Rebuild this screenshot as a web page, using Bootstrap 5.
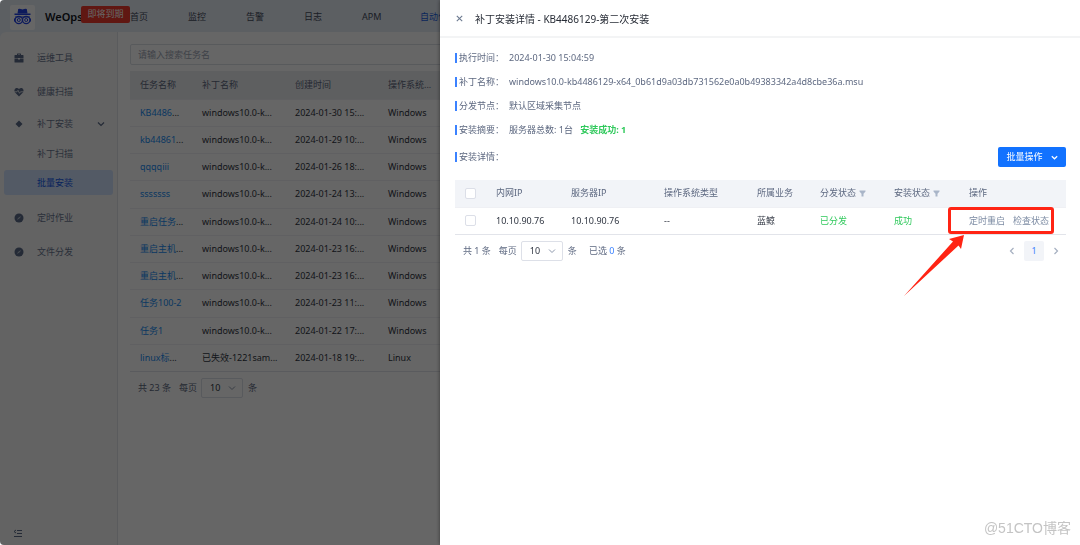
<!DOCTYPE html>
<html lang="zh-CN">
<head>
<meta charset="utf-8">
<meta name="viewport" content="width=device-width, initial-scale=1">
<title>WeOps</title>
<link href="https://cdn.jsdelivr.net/npm/bootstrap@5.3.0/dist/css/bootstrap.min.css" rel="stylesheet">
<script src="https://cdn.jsdelivr.net/npm/bootstrap@5.3.0/dist/js/bootstrap.bundle.min.js" defer></script>
<style>
  :root { --ink: #303642; --muted: #5d6880; --line: #eff0f4; --brand: #1272ff; }
  body { font-family: "Noto Sans", "Noto Sans CJK SC", sans-serif; font-size: 9px; line-height: 14px; color: var(--ink); background: #fff; overflow: hidden; }
  a { text-decoration: none; }
  svg { display: block; flex: none; }
  button { font: inherit; }

  .shell { background: #e6edf6; border-radius: 4px 0 0 4px; overflow: hidden; }
  .topbar { height: 32px; padding: 2px 0 0 10px; }
  .logo { width: 25px; height: 25px; border-radius: 2px; background: #fff; }
  .brand { font-size: 11px; font-weight: 600; color: #11151c; margin-left: 10px; }
  .brand-cell { width: 120px; }
  .expiry { top: 1px; left: 71px; width: 49px; height: 17px; line-height: 16px; border-radius: 2px; background: #f03a2d; color: #fff; }
  .topnav a { width: 58px; flex: none; color: #444c5c; }
  .topnav a.active { color: #1a5ee0; }

  .side { width: 118px; flex: none; background: #f7f7f7; border-right: 1px solid #e2e4e8; border-radius: 6px 0 0 0; padding: 9px 4px 6px; }
  .side .item { display: flex; align-items: center; height: 34px; border-radius: 3px; color: #6a7690; padding: 0 8px 0 9px; }
  .side .item > svg { width: 12px; height: 12px; margin-right: 12px; color: #5a6a88; }
  .side .parent { height: 30px; }
  .side .sub { height: 25px; padding-left: 33px; margin: 2px 0; }
  .side .sub + .sub { margin: 2px 0 6px; }
  .side .sub.active { background: #cfe0fd; color: #1559e8; }
  .side .item > svg.chev { width: 8px; height: 8px; margin: 0 0 0 auto; }

  .search { font-size: 9px; height: 21px; padding: 0 7px; border-radius: 2px; border-color: #dde0e7; }
  .search::placeholder { color: #9da5b5; }
  .grid-table { width: 100%; table-layout: fixed; }
  .grid-table th { font-weight: 400; color: var(--muted); }
  .grid-table th, .grid-table td { padding: 0 0 0 10px; white-space: nowrap; border-bottom: 1px solid var(--line); vertical-align: middle; }
  .grid-table thead tr { background: #f2f4f8; }
  .grid-table tbody tr:last-child td { border-bottom-color: #e2e4ea; }
  .tasks { height: 301px; margin-top: 6px; }
  .tasks thead th { height: 28px; background: #eceef1; }
  .tasks a { color: #188cf2; }

  .pager { color: var(--muted); height: 20px; margin-top: 6px; padding: 0 6px 0 8px; }
  .size-box { position: relative; width: 42px; height: 20px; color: #8c97ab; }
  .size-box select { appearance: none; width: 100%; height: 100%; border: 1px solid #dde0e8; border-radius: 2px; background: transparent; padding: 0 8px; color: var(--ink); font: inherit; }
  .size-box svg { position: absolute; right: 7px; top: 6px; }

  .offcanvas-backdrop.show { opacity: .6; border-radius: 4px 0 0 4px; }
  .drawer.offcanvas { width: calc(100vw - 440px); border: 0; color: var(--muted); box-shadow: 0 0 4px rgba(0,0,0,.5); }
  .drawer-head { height: 38px; border-bottom: 2px solid #f3f4f5; padding-left: 16px; }
  .drawer-head h1 { font-size: 10px; line-height: 14px; font-weight: 400; color: #272c36; margin: 2px 0 0 12px; }
  .close-x { border: 0; background: none; padding: 0; color: #6c7a90; }
  .drawer-main { padding: 13px 14px 0 15px; }
  .fact { display: flex; align-items: center; height: 14px; margin-bottom: 10px; }
  .fact dt { width: 54px; font-weight: 400; display: flex; align-items: center; gap: 2px; }
  .fact dt::before { content: ""; width: 2px; height: 10px; background: #3b82ff; }
  .fact dd { margin: 0; }
  .okay { color: #30c95c; }
  .total { margin-left: 5px; }
  .batch { width: 68px; height: 20px; border: 0; border-radius: 2px; background: var(--brand); color: #fff; font-size: 9px; padding: 0; }
  .servers { margin-top: 13px; color: var(--ink); }
  .servers th { height: 27px; }
  .servers td { height: 27px; }
  .servers .form-check-input { display: block; width: 11px; height: 11px; margin: 0; border-color: #dcdfe8; border-radius: 2px; }
  .servers svg.funnel { display: inline-block; margin-left: 3px; color: #a9b5c8; vertical-align: -1px; }
  .servers td a { color: #7c8ba3; }
  .callout-box { position: absolute; left: -11px; top: -1px; width: 106px; height: 27px; border: 3px solid #ff2414; border-radius: 3px; pointer-events: none; }
  .callout-arrow { position: absolute; left: -55px; top: 27px; pointer-events: none; }
  .page-now { width: 20px; height: 20px; border: 0; padding: 0; border-radius: 2px; background: #f2f4f8; color: #3b82ff; }
  .page-step { border: 0; padding: 0; background: none; color: #a5afc0; }
  .watermark { position: absolute; right: 9px; bottom: 7px; font: 14px/20px "Liberation Sans", "Noto Sans CJK SC", sans-serif; color: #c4c4c4; }
</style>
</head>
<body>
<div class="shell d-flex flex-column vh-100">
  <header class="topbar d-flex align-items-center flex-shrink-0">
    <div class="brand-cell d-flex align-items-center position-relative flex-shrink-0">
      <span class="logo d-flex align-items-center justify-content-center">
        <svg width="19" height="18" viewBox="0 0 19 18" fill="none" stroke="#2243e6"><path d="M5.200 1Q7 .5 9.500 1.500 12 .5 13.800 1L14.500 5.500H4.500Z" fill="#2243e6" stroke="none"/><path d="M1.500 6.300h16" stroke-width="1.600"/><circle cx="5.800" cy="12" r="3.700" stroke-width="1.300"/><circle cx="13.200" cy="12" r="3.700" stroke-width="1.300"/><circle cx="5.800" cy="12" r="1.500"/><circle cx="13.200" cy="12" r="1.500"/><path d="M2 9h15M1.500 10.500v3M17.500 10.500v3"/></svg>
      </span>
      <span class="brand">WeOps</span>
      <span class="expiry position-absolute text-center">即将到期</span>
    </div>
    <nav class="topnav d-flex overflow-hidden">
      <a href="#">首页</a><a href="#">监控</a><a href="#">告警</a><a href="#">日志</a><a href="#">APM</a><a href="#" class="active">自动化</a>
    </nav>
  </header>
  <div class="d-flex flex-grow-1">
    <aside class="side d-flex flex-column">
      <a href="#" class="item"><svg viewBox="0 0 12 12" fill="currentColor"><path d="M4 3V2q0-.5.500-.5h3Q8 1.500 8 2v1h2q.5 0 .5.500V6h-9V3.500Q1.500 3 2 3ZM5 2.500V3h2v-.5ZM1.500 6.600H5v1h2v-1h3.500v3.400q0 .5-.5.500H2q-.5 0-.5-.5Z"/></svg>运维工具</a>
      <a href="#" class="item"><svg viewBox="0 0 12 12"><path d="M6 10.500 1.800 6.200C.3 3.500 3.500.5 6 3c2.500-2.500 5.700.5 4.200 3.200Z" fill="currentColor"/><path d="M1 5.800h3l1-1.500 1.500 3 1-1.500H11" fill="none" stroke="#f7f7f7" stroke-width=".8"/></svg>健康扫描</a>
      <a href="#" class="item parent"><svg viewBox="0 0 12 12"><path d="m6 2.500 3.500 3.500L6 9.500 2.500 6Z" fill="currentColor"/></svg>补丁安装<svg class="chev" viewBox="0 0 8 8" fill="none" stroke="currentColor" stroke-width="1.200"><path d="m1 2.500 3 3 3-3"/></svg></a>
      <a href="#" class="item sub">补丁扫描</a>
      <a href="#" class="item sub active">批量安装</a>
      <a href="#" class="item"><svg viewBox="0 0 12 12"><circle cx="6" cy="6" r="4.500" fill="currentColor"/><path d="m4 8 1-2 3-2-1 2Z" fill="#b9c1cf"/></svg>定时作业</a>
      <a href="#" class="item"><svg viewBox="0 0 12 12"><circle cx="6" cy="6" r="4.500" fill="currentColor"/><path d="m4 8 1-2 3-2-1 2Z" fill="#b9c1cf"/></svg>文件分发</a>
      <button class="close-x mt-auto ms-2 align-self-start" aria-label="收起"><svg width="12" height="12" viewBox="0 0 12 12" fill="none" stroke="#5a6a88"><path d="M5 3.500h5M5 6.500h5M2 9.500h8M4 3 2 4.500 4 6"/></svg></button>
    </aside>
    <main class="flex-grow-1 bg-white pe-3" style="min-width:0">
      <div class="ms-2 ps-1 pt-2">
        <div class="pt-1"><input class="form-control search" type="text" aria-label="搜索" placeholder="请输入搜索任务名"></div>
        <table class="grid-table tasks">
          <colgroup><col style="width:62px"><col style="width:93px"><col style="width:93px"><col></colgroup>
          <thead><tr><th>任务名称</th><th>补丁名称</th><th>创建时间</th><th>操作系统...</th></tr></thead>
          <tbody>
            <tr><td><a href="#">KB4486</a>...</td><td>windows10.0-k...</td><td>2024-01-30 15:...</td><td>Windows</td></tr>
            <tr><td><a href="#">kb44861</a>...</td><td>windows10.0-k...</td><td>2024-01-29 10:...</td><td>Windows</td></tr>
            <tr><td><a href="#">qqqqiii</a></td><td>windows10.0-k...</td><td>2024-01-26 18:...</td><td>Windows</td></tr>
            <tr><td><a href="#">sssssss</a></td><td>windows10.0-k...</td><td>2024-01-24 13:...</td><td>Windows</td></tr>
            <tr><td><a href="#">重启任务</a>...</td><td>windows10.0-k...</td><td>2024-01-24 10:...</td><td>Windows</td></tr>
            <tr><td><a href="#">重启主机</a>...</td><td>windows10.0-k...</td><td>2024-01-23 16:...</td><td>Windows</td></tr>
            <tr><td><a href="#">重启主机</a>...</td><td>windows10.0-k...</td><td>2024-01-23 16:...</td><td>Windows</td></tr>
            <tr><td><a href="#">任务100-2</a></td><td>windows10.0-k...</td><td>2024-01-23 11:...</td><td>Windows</td></tr>
            <tr><td><a href="#">任务1</a></td><td>windows10.0-k...</td><td>2024-01-22 17:...</td><td>Windows</td></tr>
            <tr><td><a href="#">linux标</a>...</td><td>已失效-1221sam...</td><td>2024-01-18 19:...</td><td>Linux</td></tr>
          </tbody>
        </table>
        <div class="pager d-flex align-items-center">
          <span>共 23 条</span><label for="size-main" class="ms-2 me-1">每页</label>
          <span class="size-box"><select id="size-main"><option>10</option></select><svg width="8" height="8" viewBox="0 0 8 8" fill="none" stroke="currentColor"><path d="m1 2.500 3 3 3-3"/></svg></span>
          <span class="total">条</span>
        </div>
      </div>
    </main>
  </div>
</div>

<div class="offcanvas-backdrop show"></div>
<section class="drawer offcanvas offcanvas-end show" data-bs-backdrop="false" aria-labelledby="drawer-title">
  <header class="drawer-head d-flex align-items-center">
    <button class="close-x" aria-label="关闭"><svg width="7" height="7" viewBox="0 0 7 7" fill="none" stroke="currentColor" stroke-width="1.100"><path d="m.8.8 5.400 5.400M6.200.8.8 6.200"/></svg></button>
    <h1 id="drawer-title">补丁安装详情 - KB4486129-第二次安装</h1>
  </header>
  <div class="drawer-main">
    <dl class="m-0">
      <div class="fact"><dt>执行时间：</dt><dd>2024-01-30 15:04:59</dd></div>
      <div class="fact"><dt>补丁名称：</dt><dd>windows10.0-kb4486129-x64_0b61d9a03db731562e0a0b49383342a4d8cbe36a.msu</dd></div>
      <div class="fact"><dt>分发节点：</dt><dd>默认区域采集节点</dd></div>
      <div class="fact"><dt>安装摘要：</dt><dd>服务器总数: 1台 <strong class="okay total">安装成功: 1</strong></dd></div>
    </dl>
    <div class="d-flex align-items-center justify-content-between">
      <div class="fact m-0"><dt>安装详情：</dt></div>
      <button class="batch d-flex align-items-center justify-content-center gap-2">批量操作<svg width="7" height="7" viewBox="0 0 7 7" fill="none" stroke="currentColor" stroke-width="1.200"><path d="m.8 2.200 2.700 2.600 2.700-2.600"/></svg></button>
    </div>
    <table class="grid-table servers">
      <colgroup><col style="width:31px"><col style="width:75px"><col style="width:93px"><col style="width:93px"><col style="width:63px"><col style="width:74px"><col style="width:75px"><col></colgroup>
      <thead><tr>
        <th><input class="form-check-input" type="checkbox" aria-label="全选"></th><th>内网IP</th><th>服务器IP</th><th>操作系统类型</th><th>所属业务</th>
        <th>分发状态<svg class="funnel" width="7" height="7" viewBox="0 0 7 7" fill="currentColor"><path d="M.5.5h6v1L4.500 3.800V6.500h-2V3.800L.5 1.500Z"/></svg></th>
        <th>安装状态<svg class="funnel" width="7" height="7" viewBox="0 0 7 7" fill="currentColor"><path d="M.5.5h6v1L4.500 3.800V6.500h-2V3.800L.5 1.500Z"/></svg></th>
        <th>操作</th>
      </tr></thead>
      <tbody><tr>
        <td><input class="form-check-input" type="checkbox" aria-label="选择 10.10.90.76"></td><td>10.10.90.76</td><td>10.10.90.76</td><td>--</td><td>蓝鲸</td>
        <td class="okay">已分发</td><td class="okay">成功</td>
        <td class="position-relative"><a href="#">定时重启</a><a href="#" class="ms-2">检查状态</a>
          <span class="callout-box"></span>
          <svg class="callout-arrow" width="62" height="62" viewBox="0 0 62 62"><path d="M0 61 49 6.500 45 4 60 0 57 14 54.500 10.500Z" fill="#ff2414"/></svg>
        </td>
      </tr></tbody>
    </table>
    <div class="pager d-flex align-items-center justify-content-between">
      <div class="d-flex align-items-center">
        <span>共 1 条</span><label for="size-detail" class="ms-2 me-1">每页</label>
        <span class="size-box"><select id="size-detail"><option>10</option></select><svg width="8" height="8" viewBox="0 0 8 8" fill="none" stroke="currentColor"><path d="m1 2.500 3 3 3-3"/></svg></span>
        <span class="total">条</span><span class="ms-2 ps-1">已选 <span style="color:#3b82ff">0</span> 条</span>
      </div>
      <div class="d-flex align-items-center gap-2">
        <button class="page-step" aria-label="上一页"><svg width="8" height="8" viewBox="0 0 8 8" fill="none" stroke="currentColor" stroke-width="1.200"><path d="M5.500 1 2.500 4l3 3"/></svg></button>
        <button class="page-now">1</button>
        <button class="page-step" aria-label="下一页"><svg width="8" height="8" viewBox="0 0 8 8" fill="none" stroke="currentColor" stroke-width="1.200"><path d="m2.500 1 3 3-3 3"/></svg></button>
      </div>
    </div>
  </div>
  <div class="watermark">@51CTO博客</div>
</section>
</body>
</html>
